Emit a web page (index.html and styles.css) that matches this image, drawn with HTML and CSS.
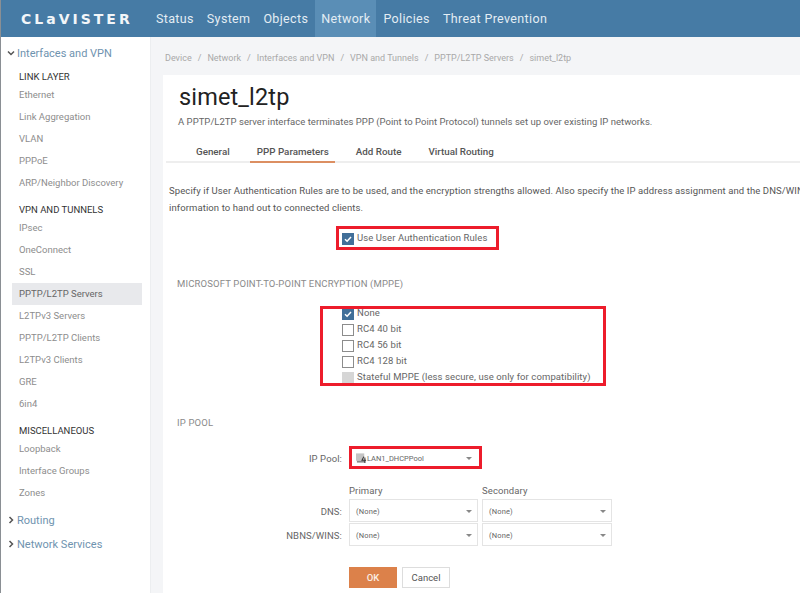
FILE: index.html
```html
<!DOCTYPE html>
<html lang="en">
<head>
<meta charset="utf-8">
<title>simet_l2tp</title>
<link rel="stylesheet" href="styles.css">
</head>
<body>
<div class="app">
  <header class="topbar">
    <div class="logo">CLaVISTER</div>
    <nav class="topnav">
      <a class="topnav-item">Status</a>
      <a class="topnav-item">System</a>
      <a class="topnav-item">Objects</a>
      <a class="topnav-item is-active">Network</a>
      <a class="topnav-item">Policies</a>
      <a class="topnav-item">Threat Prevention</a>
    </nav>
  </header>
  <div class="body-row">
    <aside class="sidebar">
      <div class="side-head first"><svg class="chev" viewBox="0 0 8 8"><path d="M1 2.5 4 5.5 7 2.5" fill="none" stroke="#555" stroke-width="1.5"/></svg>Interfaces and VPN</div>
      <div class="side-group first-group">LINK LAYER</div>
      <a class="side-item">Ethernet</a>
      <a class="side-item">Link Aggregation</a>
      <a class="side-item">VLAN</a>
      <a class="side-item">PPPoE</a>
      <a class="side-item">ARP/Neighbor Discovery</a>
      <div class="side-group">VPN AND TUNNELS</div>
      <a class="side-item">IPsec</a>
      <a class="side-item">OneConnect</a>
      <a class="side-item">SSL</a>
      <a class="side-item is-current">PPTP/L2TP Servers</a>
      <a class="side-item">L2TPv3 Servers</a>
      <a class="side-item">PPTP/L2TP Clients</a>
      <a class="side-item">L2TPv3 Clients</a>
      <a class="side-item">GRE</a>
      <a class="side-item">6in4</a>
      <div class="side-group">MISCELLANEOUS</div>
      <a class="side-item">Loopback</a>
      <a class="side-item">Interface Groups</a>
      <a class="side-item">Zones</a>
      <div class="side-head routing"><svg class="chev" viewBox="0 0 8 8"><path d="M2.5 1 5.5 4 2.5 7" fill="none" stroke="#555" stroke-width="1.5"/></svg>Routing</div>
      <div class="side-head services"><svg class="chev" viewBox="0 0 8 8"><path d="M2.5 1 5.5 4 2.5 7" fill="none" stroke="#555" stroke-width="1.5"/></svg>Network Services</div>
    </aside>
    <main class="main">
      <div class="crumbs">
        <span>Device</span><i>/</i><span>Network</span><i>/</i><span>Interfaces and VPN</span><i>/</i><span>VPN and Tunnels</span><i>/</i><span>PPTP/L2TP Servers</span><i>/</i><span>simet_l2tp</span>
      </div>
      <section class="panel">
        <h1 class="title">simet_l2tp</h1>
        <p class="desc">A PPTP/L2TP server interface terminates PPP (Point to Point Protocol) tunnels set up over existing IP networks.</p>
        <div class="tabs">
          <a class="tab">General</a>
          <a class="tab is-active">PPP Parameters</a>
          <a class="tab">Add Route</a>
          <a class="tab">Virtual Routing</a>
        </div>
        <p class="intro">Specify if User Authentication Rules are to be used, and the encryption strengths allowed. Also specify the IP address assignment and the DNS/WINS information to hand out to connected clients.</p>
        <div class="mark mark-auth">
          <label class="check"><span class="box is-on"><svg viewBox="0 0 12 12"><path d="M3 6.2 5.1 8.2 9 4" fill="none" stroke="#fff" stroke-width="1.5"/></svg></span>Use User Authentication Rules</label>
        </div>
        <h2 class="section-title mppe">MICROSOFT POINT-TO-POINT ENCRYPTION (MPPE)</h2>
        <div class="mark mark-mppe">
          <label class="check"><span class="box is-on"><svg viewBox="0 0 12 12"><path d="M3 6.2 5.1 8.2 9 4" fill="none" stroke="#fff" stroke-width="1.5"/></svg></span>None</label>
          <label class="check"><span class="box"></span>RC4 40 bit</label>
          <label class="check"><span class="box"></span>RC4 56 bit</label>
          <label class="check"><span class="box"></span>RC4 128 bit</label>
          <label class="check"><span class="box is-disabled"></span>Stateful MPPE (less secure, use only for compatibility)</label>
        </div>
        <h2 class="section-title pool">IP POOL</h2>
        <div class="pool-row">
          <span class="field-label">IP Pool:</span>
          <div class="mark mark-pool">
            <div class="pick pick-plain">
              <svg class="pool-icon" viewBox="0 0 12 12"><rect x="0" y="1" width="9" height="8" fill="#c4c4c4"/><rect x="1" y="9" width="9" height="2" fill="#8a8a8a"/><path d="M8.5 4.5 6.5 8.5H11M9.7 5.5V11.5" fill="none" stroke="#333" stroke-width="1.1"/></svg>
              <span class="pick-text pick-name">LAN1_DHCPPool</span><span class="caret"></span>
            </div>
          </div>
        </div>
        <div class="dns-grid">
          <span></span><span class="col-head">Primary</span><span class="col-head">Secondary</span>
          <span class="field-label">DNS:</span>
          <div class="pick"><span class="pick-text">(None)</span><span class="caret"></span></div>
          <div class="pick"><span class="pick-text">(None)</span><span class="caret"></span></div>
          <span class="field-label">NBNS/WINS:</span>
          <div class="pick"><span class="pick-text">(None)</span><span class="caret"></span></div>
          <div class="pick"><span class="pick-text">(None)</span><span class="caret"></span></div>
        </div>
        <div class="actions">
          <button class="btn btn-ok">OK</button>
          <button class="btn btn-cancel">Cancel</button>
        </div>
      </section>
    </main>
  </div>
</div>
</body>
</html>
```
FILE: styles.css
```css
* { box-sizing: border-box; }
html, body { margin: 0; height: 100%; overflow: hidden; }
body { font-family: Roboto, "Liberation Sans", sans-serif; color: #555; background: #fff; }
.app { width: 800px; height: 593px; display: flex; flex-direction: column; border-left: 1px solid #8a8f94; overflow: hidden; }

.topbar { height: 37px; flex: none; background: #467ba5; display: flex; align-items: stretch; }
.logo { width: 149px; padding-left: 20px; align-self: center; font-family: "DejaVu Sans", sans-serif; font-weight: 700; font-size: 14px; line-height: 14px; letter-spacing: 3px; color: #f2f6f9; white-space: nowrap; }
.topnav { display: flex; gap: 1px; }
.topnav-item { display: flex; align-items: center; padding: 0 6px; font-size: 12.5px; letter-spacing: .35px; color: #e3edf4; }
.topnav-item.is-active { background: #5a8eb6; }

.body-row { flex: 1; display: flex; min-height: 0; }
.sidebar { width: 150px; flex: none; background: #fff; border-right: 1px solid #eceef0; padding-top: 8px; }
.side-head { height: 16px; display: flex; align-items: center; font-size: 11px; color: #6f93af; padding-left: 6px; white-space: nowrap; }
.chev { width: 8px; height: 8px; margin-right: 2px; flex: none; }
.side-group { margin: 9px 0 0 18px; height: 14px; line-height: 14px; font-size: 9.5px; color: #333; white-space: nowrap; }
.side-item { display: block; height: 22px; line-height: 22px; margin-left: 11px; width: 130px; padding-left: 7px; font-size: 9.5px; color: #8d8d8d; white-space: nowrap; }
.side-item.is-current { background: #e8e9ec; color: #666; }
.side-head.routing { margin-top: 8px; }
.side-head.services { margin-top: 8px; }

.main { flex: 1; min-width: 0; background: #f4f5f7; padding-left: 12px; display: flex; flex-direction: column; }
.crumbs { height: 38px; padding: 15px 0 0 2px; font-size: 9px; line-height: 12px; color: #a9a9a9; white-space: nowrap; }
.crumbs i { font-style: normal; margin: 0 6px; }
.panel { flex: 1; background: #fff; overflow: hidden; }
.title { margin: 9px 0 0 16px; font-size: 23.5px; line-height: 26px; font-weight: 400; letter-spacing: .15px; color: #222; }
.desc { margin: 6px 0 0 15px; font-size: 9.5px; line-height: 12px; letter-spacing: .03px; color: #666; white-space: nowrap; }
.tabs { margin: 14px 0 0 3px; height: 21px; display: flex; padding-left: 23.5px; border-bottom: 2px solid #eeeeee; }
.tab { height: 21px; padding: 0 6.5px; margin-right: 14px; line-height: 19px; font-size: 9.8px; font-weight: 500; color: #555; white-space: nowrap; }
.tab.is-active { border-bottom: 2px solid #dc8f62; }
.intro { margin: 19px 0 0 6px; width: 680px; font-size: 9.5px; line-height: 17px; letter-spacing: .1px; color: #555; }

.mark { position: relative; }
.mark::after { content: ""; position: absolute; inset: 0; border: 3px solid #ed1c2b; pointer-events: none; }
.mark-auth { margin: 10px 0 0 173px; width: 163px; height: 24px; padding: 6px 0 0 6px; }
.check { display: flex; align-items: flex-start; height: 16px; font-size: 9.5px; line-height: 14px; letter-spacing: .1px; color: #666; white-space: nowrap; }
.check:first-child { margin-top: -1px; }
.box { width: 12px; height: 12px; flex: none; margin: 2px 3px 0 0; border: 1px solid #8c8c8c; background: #fff; display: block; }
.box svg { display: block; width: 12px; height: 12px; margin: -1px; }
.box.is-on { background: #416f99; border-color: #416f99; }
.box.is-disabled { background: #d6d6d6; border-color: #d6d6d6; }
.section-title { margin: 0; font-size: 9.5px; line-height: 12px; font-weight: 400; letter-spacing: .15px; color: #8a8a8a; white-space: nowrap; }
.section-title.mppe { margin: 28px 0 0 14px; }
.mark-mppe { margin: 17px 0 0 157px; width: 286px; height: 80px; padding: 0 0 0 22px; }
.section-title.pool { margin: 31px 0 0 14px; }

.pool-row { display: flex; align-items: center; margin: 17px 0 0 6px; }
.field-label { width: 180px; padding: 2px 7px 0 0; text-align: right; font-size: 9.5px; line-height: 14px; letter-spacing: .1px; color: #666; white-space: nowrap; }
.mark-pool { width: 133px; height: 23px; }
.dns-grid { display: grid; grid-template-columns: 176px 129px 130px; column-gap: 4px; row-gap: 1px; margin: 14px 0 0 6px; }
.dns-grid > .field-label { align-self: center; width: auto; padding-right: 3px; }
.col-head { padding-top: 1px; font-size: 9.5px; line-height: 14px; letter-spacing: .1px; color: #666; height: 15px; }
.pick { height: 23px; display: flex; align-items: center; padding: 1px 5px 0 6px; border: 1px solid #e4e4e4; background: #fff; }
.pick-plain { padding-right: 9px; border-color: transparent; }
.pick-text { flex: 1; font-size: 7.5px; letter-spacing: .15px; color: #666; white-space: nowrap; }
.pick-name { letter-spacing: 0; }
.pool-icon { width: 11px; height: 12px; flex: none; }
.caret { width: 0; height: 0; flex: none; border-left: 3px solid transparent; border-right: 3px solid transparent; border-top: 3px solid #888; }

.actions { display: flex; gap: 5px; margin: 21px 0 0 186px; }
.btn { width: 48px; height: 21px; padding: 0; font: 500 9.5px Roboto, sans-serif; border-radius: 0; }
.btn-ok { background: #dc814a; border: 0; color: #fbeee5; }
.btn-cancel { background: #fff; border: 1px solid #ddd; color: #555; font-weight: 400; }
```
